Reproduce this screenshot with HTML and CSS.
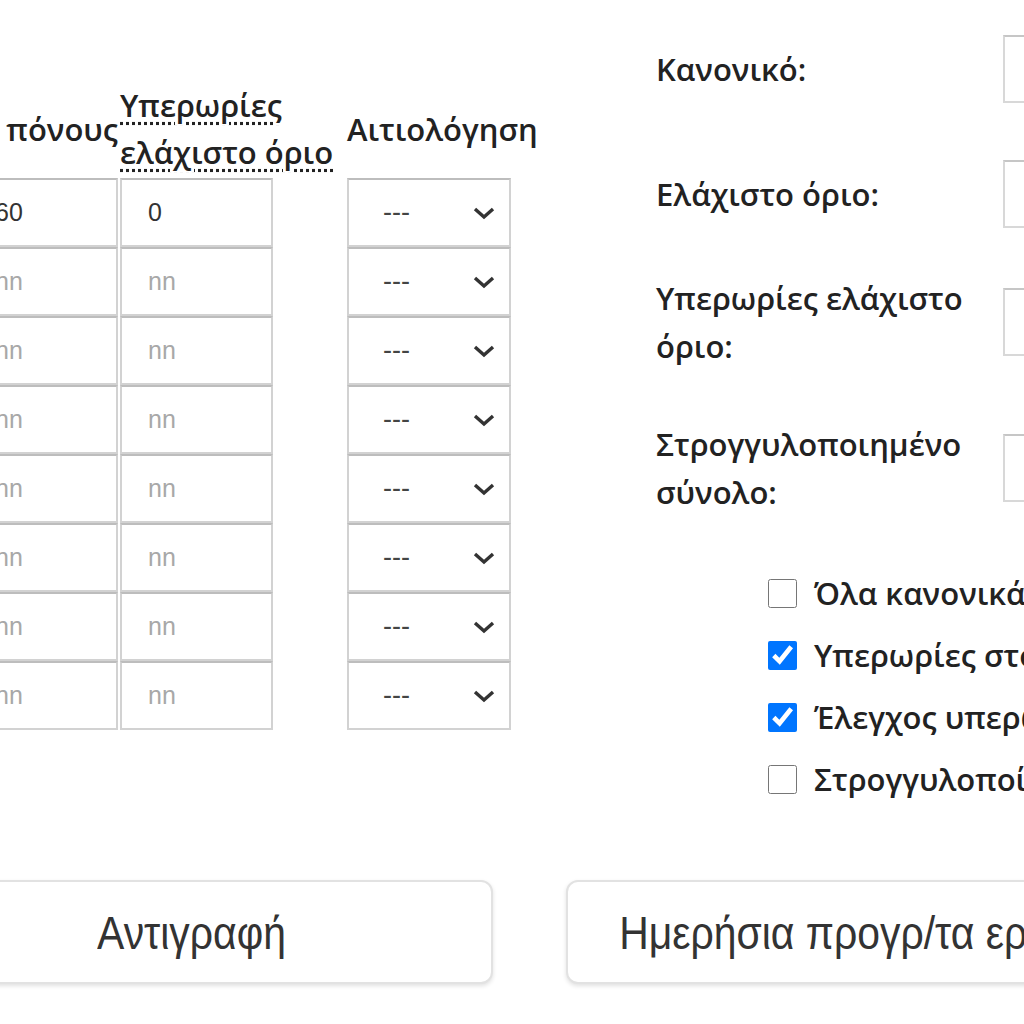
FILE: index.html
```html
<!DOCTYPE html>
<html lang="el">
<head>
    <meta charset="UTF-8">
    <meta name="viewport" content="width=device-width, initial-scale=1.0">
    <title>Ωράριο</title>
    <link rel="stylesheet" href="styles.css">
</head>
<body>
<div class="page">
    <div class="top">
        <!-- Πίνακας ωρών -->
        <div class="hours">
            <div class="hours-grid">
                <div class="th th-first">Λεπτά πόνους</div>
                <div class="th"><abbr title="Υπερωρίες ελάχιστο όριο">Υπερωρίες<br>ελάχιστο όριο</abbr></div>
                <div class="th">Αιτιολόγηση</div>

                <input class="cell" type="text" value="60"><input class="cell" type="text" value="0">
                <div class="select"><span>---</span><svg width="24" height="14" viewBox="0 0 24 14"><path d="M3 3 L12 11 L21 3" fill="none" stroke="#333" stroke-width="3.4"/></svg></div>

                <input class="cell" type="text" placeholder="nn"><input class="cell" type="text" placeholder="nn">
                <div class="select"><span>---</span><svg width="24" height="14" viewBox="0 0 24 14"><path d="M3 3 L12 11 L21 3" fill="none" stroke="#333" stroke-width="3.4"/></svg></div>

                <input class="cell" type="text" placeholder="nn"><input class="cell" type="text" placeholder="nn">
                <div class="select"><span>---</span><svg width="24" height="14" viewBox="0 0 24 14"><path d="M3 3 L12 11 L21 3" fill="none" stroke="#333" stroke-width="3.4"/></svg></div>

                <input class="cell" type="text" placeholder="nn"><input class="cell" type="text" placeholder="nn">
                <div class="select"><span>---</span><svg width="24" height="14" viewBox="0 0 24 14"><path d="M3 3 L12 11 L21 3" fill="none" stroke="#333" stroke-width="3.4"/></svg></div>

                <input class="cell" type="text" placeholder="nn"><input class="cell" type="text" placeholder="nn">
                <div class="select"><span>---</span><svg width="24" height="14" viewBox="0 0 24 14"><path d="M3 3 L12 11 L21 3" fill="none" stroke="#333" stroke-width="3.4"/></svg></div>

                <input class="cell" type="text" placeholder="nn"><input class="cell" type="text" placeholder="nn">
                <div class="select"><span>---</span><svg width="24" height="14" viewBox="0 0 24 14"><path d="M3 3 L12 11 L21 3" fill="none" stroke="#333" stroke-width="3.4"/></svg></div>

                <input class="cell" type="text" placeholder="nn"><input class="cell" type="text" placeholder="nn">
                <div class="select"><span>---</span><svg width="24" height="14" viewBox="0 0 24 14"><path d="M3 3 L12 11 L21 3" fill="none" stroke="#333" stroke-width="3.4"/></svg></div>

                <input class="cell" type="text" placeholder="nn"><input class="cell" type="text" placeholder="nn">
                <div class="select"><span>---</span><svg width="24" height="14" viewBox="0 0 24 14"><path d="M3 3 L12 11 L21 3" fill="none" stroke="#333" stroke-width="3.4"/></svg></div>
            </div>
        </div>

        <!-- Σύνολα και επιλογές -->
        <div class="side">
            <div class="totals">
                <div class="total-row">
                    <label>Κανονικό:</label>
                    <input class="total-input" type="text">
                </div>
                <div class="total-row total-row-second">
                    <label>Ελάχιστο όριο:</label>
                    <input class="total-input" type="text">
                </div>
                <div class="total-row">
                    <label>Υπερωρίες ελάχιστο όριο:</label>
                    <input class="total-input" type="text">
                </div>
                <div class="total-row">
                    <label>Στρογγυλοποιημένο σύνολο:</label>
                    <input class="total-input" type="text">
                </div>
            </div>

            <div class="options">
                <label class="option"><input type="checkbox"> Όλα κανονικά</label>
                <label class="option"><input type="checkbox" checked> Υπερωρίες στο σύνολο</label>
                <label class="option"><input type="checkbox" checked> Έλεγχος υπερωριών</label>
                <label class="option"><input type="checkbox"> Στρογγυλοποίηση</label>
            </div>
        </div>
    </div>

    <div class="actions">
        <button class="btn"><span>Αντιγραφή</span></button>
        <button class="btn"><span>Ημερήσια προγρ/τα εργαζομένων</span></button>
    </div>
</div>
</body>
</html>
```

FILE: styles.css
```css
/* Общие стили */
html, body { margin: 0; padding: 0; background-color: #fff; overflow: hidden; width: 1024px; height: 1024px; }
body { font-family: "Open Sans", Arial, sans-serif; color: #222; }

.page {
    width: 1300px;
    margin-left: -33px;
}

.top {
    display: flex;
}

/* Таблица часов */
.hours {
    flex: 0 0 689px;
    padding-top: 82px;
}

.hours-grid {
    display: grid;
    grid-template-columns: 151px 225px 200px;
    column-gap: 2px;
}

.th {
    font-size: 31px;
    font-weight: 600;
    line-height: 47px;
    white-space: nowrap;
    align-self: center;
    margin-bottom: 2px;
}

.th-first {
    display: flex;
    justify-content: flex-end;
}

.th abbr {
    text-decoration: underline dotted;
    text-underline-offset: 5px;
}

.cell {
    box-sizing: border-box;
    width: 151px;
    height: 69px;
    border: 2px solid #d2d2d2;
    border-top-color: #bdbdbd;
    padding: 0 0 0 26px;
    font-family: Arial, "Liberation Sans", sans-serif;
    font-size: 25px;
    color: #333;
    outline: none;
}

.cell + .cell {
    width: 153px;
}

.cell::placeholder {
    color: #a8a8a8;
}

.select {
    box-sizing: border-box;
    width: 164px;
    height: 69px;
    border: 2px solid #d2d2d2;
    border-top-color: #bdbdbd;
    display: flex;
    align-items: center;
    justify-content: space-between;
    padding: 0 13px 0 34px;
    font-family: Arial, "Liberation Sans", sans-serif;
    font-size: 27px;
    color: #444;
}

/* Правая колонка */
.side {
    flex: 0 0 auto;
    padding-top: 35px;
}

.totals {
    display: flex;
    flex-direction: column;
    gap: 50px;
}

.total-row {
    display: flex;
    align-items: center;
}

.total-row-second {
    margin-top: 7px;
    margin-bottom: -4px;
}

.total-row label {
    width: 347px;
    font-size: 31px;
    font-weight: 600;
    line-height: 48px;
}

.total-input {
    box-sizing: border-box;
    width: 200px;
    height: 68px;
    border: 2px solid #d8d8d8;
    border-top-color: #c6c6c6;
    outline: none;
}

.options {
    margin-top: 46px;
    padding-left: 112px;
    display: flex;
    flex-direction: column;
}

.option {
    display: flex;
    align-items: center;
    gap: 17px;
    height: 62px;
    font-size: 31px;
    font-weight: 600;
    white-space: nowrap;
}

.option input {
    width: 29px;
    height: 29px;
    margin: 0;
}

/* Кнопки */
.actions {
    display: flex;
    gap: 73px;
    margin-top: 70px;
    margin-left: -76px;
}

.btn {
    width: 602px;
    height: 104px;
    background-color: #fff;
    border: 2px solid #e2e2e2;
    border-radius: 12px;
    box-shadow: 0 2px 4px rgba(0, 0, 0, 0.12);
    font-family: "Liberation Sans", Arial, sans-serif;
    font-size: 47px;
    color: #333;
    cursor: pointer;
    white-space: nowrap;
}

.btn span {
    display: inline-block;
    transform: scaleX(0.87);
}
```
